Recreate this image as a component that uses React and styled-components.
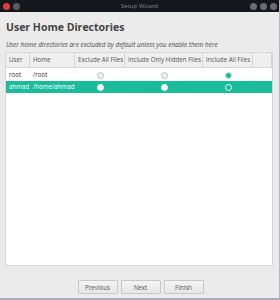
import React, { useState } from 'react';
import styled, { createGlobalStyle } from 'styled-components';

const GlobalStyle = createGlobalStyle`
  html, body {
    margin: 0;
    padding: 0;
    background: #ebebeb;
  }
  body {
    font-family: "Open Sans", "DejaVu Sans", sans-serif;
  }
`;

const teal = '#1abc9c';

const Window = styled.div`
  width: 279px;
  height: 298px;
  display: flex;
  flex-direction: column;
  background: #ebebeb;
  border-right: 1px solid #b8b8be;
  border-bottom: 2px solid #a9abb8;
`;

const TitleBar = styled.div`
  height: 12px;
  flex-shrink: 0;
  background: #16161d;
  display: flex;
  align-items: center;
  padding: 0 2px 0 3px;
  position: relative;
`;

const TitleText = styled.div`
  position: absolute;
  left: 0;
  right: 0;
  text-align: center;
  font-size: 6px;
  color: #8a8a90;
  line-height: 12px;
`;

const Dots = styled.div`
  display: flex;
  gap: 3px;
  margin-left: ${(p) => (p.right ? 'auto' : '0')};
`;

const Dot = styled.span`
  width: 7px;
  height: 7px;
  border-radius: 50%;
  background: ${(p) => p.color};
`;

const Body = styled.div`
  flex: 1;
  display: flex;
  flex-direction: column;
  padding: 0 6px 0 5px;
`;

const Heading = styled.h1`
  margin: 8px 0 0 1px;
  font-size: 10.5px;
  font-weight: 700;
  color: #444;
  line-height: 14px;
`;

const Subtitle = styled.p`
  margin: 6px 0 0 1px;
  font-size: 6.4px;
  font-style: italic;
  color: #4a4a4a;
  line-height: 10px;
`;

const Table = styled.div`
  margin-top: 2px;
  height: 214px;
  flex-shrink: 0;
  background: #fff;
  border: 1px solid #d6d6d6;
  box-sizing: border-box;
  display: flex;
  flex-direction: column;
`;

const Row = styled.div`
  display: grid;
  grid-template-columns: 24px 45px 50px 78px 50px 1fr;
  height: ${(p) => (p.header ? '14px' : '12px')};
  background: ${(p) => (p.header ? '#efefef' : p.selected ? teal : '#fff')};
  color: ${(p) => (p.selected ? '#fff' : p.header ? '#555' : '#333')};
  border-bottom: ${(p) => (p.header ? '1px solid #d6d6d6' : 'none')};
  margin-top: ${(p) => (p.first ? '1px' : '0')};
`;

const Cell = styled.div`
  font-size: 6.2px;
  line-height: ${(p) => (p.header ? '14px' : '12px')};
  padding-left: 3px;
  white-space: nowrap;
  overflow: hidden;
  border-right: ${(p) => (p.header ? '1px solid #d6d6d6' : 'none')};
  display: flex;
  align-items: center;
  justify-content: ${(p) => (p.center ? 'center' : 'flex-start')};
  ${(p) => p.center && 'padding-left: 0;'}
`;

const Radio = styled.span`
  width: 7px;
  height: 7px;
  border-radius: 50%;
  box-sizing: border-box;
  ${(p) => {
    if (p.onSel && p.checked) return `border: 1px solid #e8fff8; background: ${teal};`;
    if (p.onSel) return 'background: #f6f6f6; border: 1px solid #f6f6f6;';
    if (p.checked) return `background: ${teal}; border: 1.5px solid #c6eee3;`;
    return 'background: #f0f0f0; border: 1px solid #c4c4c4;';
  }}
`;

const Footer = styled.div`
  display: flex;
  justify-content: center;
  gap: 3px;
  margin-top: 14px;
  padding-left: 3px;
`;

const Button = styled.button`
  width: 40px;
  height: 14px;
  padding: 0;
  font-family: inherit;
  font-size: 6.2px;
  color: #555;
  background: linear-gradient(#f4f4f4, #e6e6e6);
  border: 1px solid #c8c8c8;
  border-radius: 1px;
`;

const columns = ['exclude', 'hidden', 'all'];

const App = () => {
  const [rows] = useState([
    { user: 'root', home: '/root', choice: 'all' },
    { user: 'ahmad', home: '/home/ahmad', choice: 'all' },
  ]);
  const selected = 1;

  return (
    <>
      <GlobalStyle />
      <Window>
        <TitleBar>
          <TitleText>Setup Wizard</TitleText>
          <Dots>
            <Dot color="#d9403a" />
            <Dot color="#5a5a5f" />
          </Dots>
          <Dots right>
            <Dot color="#6a6a70" />
            <Dot color="#6a6a70" />
            <Dot color="#6a6a70" />
          </Dots>
        </TitleBar>
        <Body>
          <Heading>User Home Directories</Heading>
          <Subtitle>User home directories are excluded by default unless you enable them here</Subtitle>
          <Table>
            <Row header>
              <Cell header>User</Cell>
              <Cell header>Home</Cell>
              <Cell header>Exclude All Files</Cell>
              <Cell header>Include Only Hidden Files</Cell>
              <Cell header>Include All Files</Cell>
              <Cell header />
            </Row>
            {rows.map((r, i) => (
              <Row key={r.user} selected={i === selected} first={i === 0}>
                <Cell>{r.user}</Cell>
                <Cell>{r.home}</Cell>
                {columns.map((c) => (
                  <Cell center key={c}>
                    <Radio checked={r.choice === c} onSel={i === selected} />
                  </Cell>
                ))}
                <Cell />
              </Row>
            ))}
          </Table>
          <Footer>
            <Button>Previous</Button>
            <Button>Next</Button>
            <Button>Finish</Button>
          </Footer>
        </Body>
      </Window>
    </>
  );
};

export default App;
